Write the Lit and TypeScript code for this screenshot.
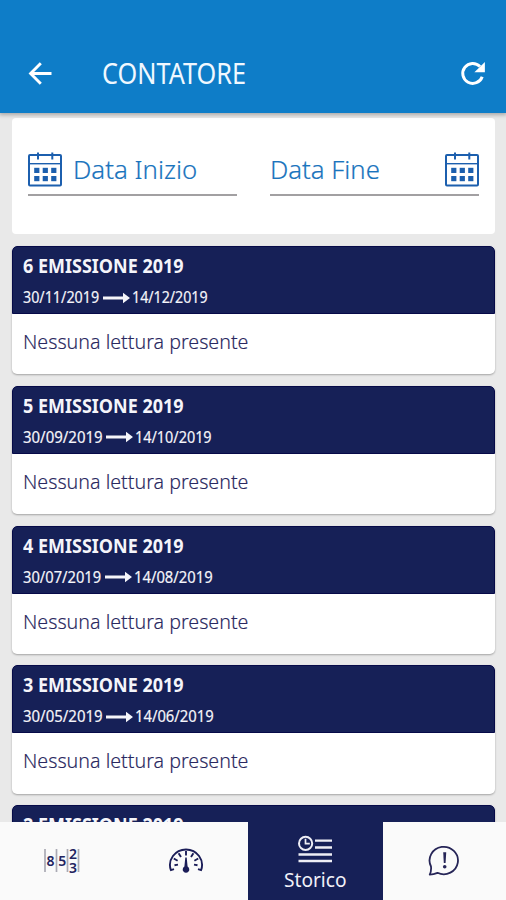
import { LitElement, html, css, svg } from "lit";
import { customElement, property, query } from "lit/decorators.js";

/** A single line of text, condensed or widened to fill the given width. */
@customElement("fit-text")
class FitText extends LitElement {
  @property({ type: Number }) width = 100;
  @query("span") private line!: HTMLSpanElement;

  static styles = css`
    :host { display: block; white-space: nowrap; flex: none; }
    span { display: inline-block; transform-origin: 0 50%; }
  `;

  updated() {
    this.style.width = `${this.width}px`;
    this.line.style.transform = `scaleX(${this.width / this.line.offsetWidth})`;
  }

  render() {
    return html`<span><slot></slot></span>`;
  }
}

const calendar = html`<svg class="calendar" width="36" height="36" viewBox="0 0 36 36">
  <rect x="2" y="4" width="32" height="30.6" rx="1" fill="none" stroke="#1c5fae" stroke-width="2"/>
  <path d="M2 12.7H34" stroke="#1c5fae" stroke-width="1.4"/>
  <path d="M11 1.5V8.5M25.3 1.5V8.5" stroke="#1c5fae" stroke-width="2"/>
  <g fill="#1c5fae">
    ${[7.2, 15.7, 24.2].map(x => [16.8, 25].map(y => svg`<rect x=${x} y=${y} width="5.2" height="5.2"/>`))}
  </g>
</svg>`;

const readings = [
  { n: 6, from: "30/11/2019", to: "14/12/2019", w1: 76, w2: 75.5 },
  { n: 5, from: "30/09/2019", to: "14/10/2019", w1: 79.5, w2: 76.5 },
  { n: 4, from: "30/07/2019", to: "14/08/2019", w1: 78, w2: 78.5 },
  { n: 3, from: "30/05/2019", to: "14/06/2019", w1: 79.5, w2: 78.5 },
  { n: 2, from: "30/03/2019", to: "14/04/2019", w1: 79.5, w2: 78.5 },
];

@customElement("app-root")
class AppRoot extends LitElement {
  static styles = css`
    :host {
      display: flex; flex-direction: column; position: relative;
      width: 506px; height: 900px; overflow: hidden;
      background: #e9e9e9;
      font-family: "Noto Sans", sans-serif;
    }
    svg { display: block; flex: none; }
    header {
      flex: none; box-sizing: border-box; height: 112.5px;
      padding: 34px 19px 0 27px;
      display: flex; align-items: center;
      background: #0e7dc8; color: #f0f8ff;
      box-shadow: 0 1px 4px 1px rgba(0,0,0,.28); z-index: 1;
    }
    .title { font-size: 28.5px; line-height: 40px; margin: -1px 0 0 49px; }
    .refresh { margin-left: auto; }
    main {
      flex: 1; min-height: 0; overflow: hidden;
      padding: 5.5px 11px 0 12px;
      display: flex; flex-direction: column;
    }
    .filters {
      flex: none; box-sizing: border-box; height: 116px; margin-bottom: 12px;
      border-radius: 4px; background: #fff;
      padding: 32px 16px 0; display: flex; justify-content: space-between;
    }
    .field {
      box-sizing: border-box; width: 209px; height: 45.5px;
      border-bottom: 2px solid #a2a0a2;
      display: flex; align-items: flex-start;
      color: #1a74bd; font-size: 25.5px; font-weight: 300; line-height: 39px;
      -webkit-text-stroke: .2px #1a74bd;
    }
    .field.end { justify-content: space-between; }
    .field .calendar { margin-left: -1px; margin-top: 1px; }
    .field.end .calendar { margin-left: 0; margin-right: -1px; }
    .start fit-text { margin-left: 10px; }
    .card {
      flex: none; height: 128.2px; margin-bottom: 11.6px;
      border-radius: 5px; overflow: hidden; background: #fff;
      box-shadow: 0 1px 2px rgba(0,0,0,.3);
    }
    .head {
      box-sizing: border-box; height: 68px; padding: 7px 11px 0;
      background: #162057; color: #f5f5fa;
      border: 1px solid #060a48;
      border-radius: 5px 5px 0 0;
    }
    .name { font-size: 19px; line-height: 24px; font-weight: 700; margin-left: -1px; }
    .range {
      display: flex; align-items: center; margin: 8px 0 0 -1px;
      font-size: 16px; line-height: 23px;
      -webkit-text-stroke: .2px #f5f5fa;
    }
    .range svg { margin: 0 2px 0 3.5px; }
    .empty {
      padding: 13px 11px; color: #2a2860;
      font-size: 20px; font-weight: 300; line-height: 30px;
      -webkit-text-stroke: .15px #2a2860;
    }
    nav {
      flex: none; height: 78.5px; display: grid;
      grid-template-columns: 124px 124px 134.5px 1fr;
      background: #fafafa; z-index: 1;
    }
    .tab { display: flex; flex-direction: column; align-items: center; justify-content: center; }
    .active {
      justify-content: flex-start; padding-top: 12px;
      background: #162057; color: #f1f1f8; font-size: 20.5px; line-height: 30px;
    }
  `;

  render() {
    return html`
      <header>
        <svg width="26" height="26" viewBox="0 0 26 26" fill="none" stroke="#fff" stroke-width="2.9">
          <path d="M24.5 13.5H3.5M13.8 3.3L3.6 13.5L13.8 23.7"/>
        </svg>
        <fit-text class="title" width="144.5">CONTATORE</fit-text>
        <svg class="refresh" width="28" height="28" viewBox="0 0 28 28">
          <path d="M23.2 17.7A10 10 0 1 1 21 7.5" fill="none" stroke="#fff" stroke-width="3"/>
          <path d="M25.9 3.1V13.3H15.4Z" fill="#fff"/>
        </svg>
      </header>
      <main>
        <section class="filters">
          <div class="field start">${calendar}<fit-text width="124.5">Data Inizio</fit-text></div>
          <div class="field end"><fit-text width="110">Data Fine</fit-text>${calendar}</div>
        </section>
        ${readings.map(r => html`
          <article class="card">
            <div class="head">
              <fit-text class="name" width="161">${r.n} EMISSIONE 2019</fit-text>
              <div class="range">
                <fit-text width=${r.w1}>${r.from}</fit-text>
                <svg width="27" height="12" viewBox="0 0 27 12" fill="#f5f5fa">
                  <path d="M0 4.5H20V0.8L27 6L20 11.2V7.5H0Z"/>
                </svg>
                <fit-text width=${r.w2}>${r.to}</fit-text>
              </div>
            </div>
            <fit-text class="empty" width="225">Nessuna lettura presente</fit-text>
          </article>`)}
      </main>
      <nav>
        <div class="tab">
          <svg width="36" height="28" viewBox="0 0 36 28" font-family="Noto Sans, sans-serif" font-weight="600" fill="#22235f">
            <path d="M1 2V25M12.5 2V25M23.5 2V25M34.5 2V25" stroke="#aaaab4" stroke-width="1.7"/>
            <text x="2.6" y="18.6" font-size="14">8</text>
            <text x="14.2" y="18.6" font-size="14">5</text>
            <text x="25" y="12" font-size="14">2</text>
            <text x="25" y="25.5" font-size="14">3</text>
          </svg>
        </div>
        <div class="tab">
          <svg width="36" height="30" viewBox="0 0 36 30" fill="none" stroke="#1b1d58" stroke-width="1.9">
            <path d="M6 23.2L2.9 24.2A16 15.6 0 1 1 33.1 24.2L30 23.2" stroke-linejoin="round"/>
            <path d="M18 5V9.5M10.6 7.3L13 11M25.4 7.3L23 11M5.8 12.5L9.6 14.7M30.2 12.5L26.4 14.7M6.5 19.2L10 18.6M29.5 19.2L26 18.6"/>
            <path d="M17.3 11.5H18.7L19.6 20.6A3.3 3.3 0 1 1 16.4 20.6Z" fill="#1b1d58" stroke="none"/>
          </svg>
        </div>
        <div class="tab active">
          <svg width="36" height="30" viewBox="0 0 36 30" fill="none" stroke="#eeeef5" stroke-width="2.3">
            <path d="M18 6.6H35M18 13.5H35M1.5 20.5H35M1.5 27H35"/>
            <circle cx="8.6" cy="9.4" r="8.6" fill="#162057" stroke="none"/>
            <circle cx="8.6" cy="9.4" r="6.6" stroke-width="2"/>
            <path d="M8.5 4.8V9.6H12.8" stroke-width="1.7"/>
          </svg>
          <fit-text width="62.5">Storico</fit-text>
        </div>
        <div class="tab">
          <svg width="34" height="32" viewBox="0 0 34 32" fill="none" stroke="#262557" stroke-width="1.8">
            <path d="M4 21.5A14.2 13.7 0 1 1 10.5 27.8Q6.5 29.5 2.7 29.6Q4.5 26.5 4 21.5Z" stroke-linejoin="round"/>
            <path d="M16.2 7.2H19.2L18.6 18H16.8Z" fill="#262557" stroke="none"/>
            <circle cx="17.7" cy="21.7" r="1.8" fill="#262557" stroke="none"/>
          </svg>
        </div>
      </nav>
    `;
  }
}
